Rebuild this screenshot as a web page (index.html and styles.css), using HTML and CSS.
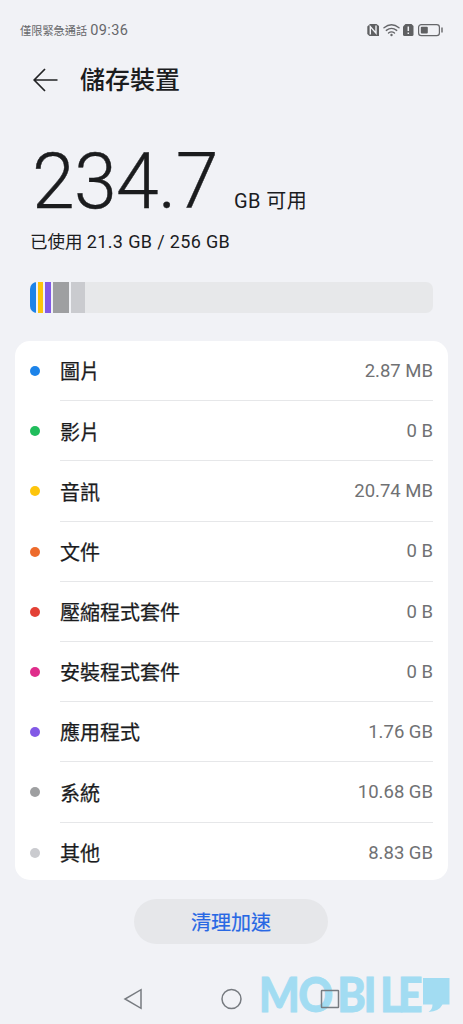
FILE: index.html
```html
<!DOCTYPE html>
<html lang="zh-Hant">
<head>
<meta charset="utf-8">
<title>儲存裝置</title>
<link rel="stylesheet" href="styles.css">
</head>
<body>
<div class="screen">
  <div class="status">
    <span class="carrier">僅限緊急通話</span><span class="clock">09:36</span>
    <svg class="status-icons" width="78" height="16" viewBox="0 0 78 16">
      <path d="M3 2H9.500L12 4V14H2.500L0.300 12V4.500Z" fill="#5f6062"/>
      <path d="M3.300 12.500V4.600L9 11.200V3.500" fill="none" stroke="#f1f2f6" stroke-width="1.400"/>
      <g fill="none" stroke="#66676a" stroke-width="1.400" stroke-linecap="round">
        <path d="M17 5.800Q24.500 -0.200 32 5.800"/><path d="M19.300 8.400Q24.500 4.300 29.700 8.400"/><path d="M21.500 11Q24.500 8.700 27.500 11"/>
      </g>
      <circle cx="24.500" cy="13" r="1.200" fill="#66676a"/>
      <path d="M38.500 2H44.500L46.500 4V12.500Q46.500 14 45 14H37.500Q36 14 36 12.500V4.500Z" fill="#5f6062"/>
      <path d="M41.300 4.600V9M41.300 10.500V12" stroke="#f1f2f6" stroke-width="1.500"/>
      <rect x="51.600" y="2.600" width="20.800" height="11" rx="2.700" fill="none" stroke="#66676a" stroke-width="1.200"/>
      <rect x="53.800" y="4.700" width="7" height="6.800" rx="1" fill="#5f6062"/>
      <path d="M75 5.500V10.500" stroke="#66676a" stroke-width="1.400"/>
    </svg>
  </div>
  <header class="title-bar">
    <svg width="26" height="26" viewBox="0 0 26 26" fill="none" stroke="#222325" stroke-width="1.700"><path d="M25.500 13H2.500M13 2L2.200 13L13 24"/></svg>
    <h1>儲存裝置</h1>
  </header>
  <div class="available"><span class="amount">234.7</span><span class="unit">GB 可用</span></div>
  <p class="used">已使用 <span class="figures">21.3 GB / 256 GB</span></p>
  <div class="bar"><i class="seg blue"></i><i class="seg yellow"></i><i class="seg purple"></i><i class="seg gray"></i><i class="seg silver"></i></div>
  <ul class="card">
    <li><i class="dot blue"></i><div class="row"><span>圖片</span><b>2.87 MB</b></div></li>
    <li><i class="dot green"></i><div class="row"><span>影片</span><b>0 B</b></div></li>
    <li><i class="dot yellow"></i><div class="row"><span>音訊</span><b>20.74 MB</b></div></li>
    <li><i class="dot orange"></i><div class="row"><span>文件</span><b>0 B</b></div></li>
    <li><i class="dot red"></i><div class="row"><span>壓縮程式套件</span><b>0 B</b></div></li>
    <li><i class="dot pink"></i><div class="row"><span>安裝程式套件</span><b>0 B</b></div></li>
    <li><i class="dot purple"></i><div class="row"><span>應用程式</span><b>1.76 GB</b></div></li>
    <li><i class="dot gray"></i><div class="row"><span>系統</span><b>10.68 GB</b></div></li>
    <li><i class="dot silver"></i><div class="row"><span>其他</span><b>8.83 GB</b></div></li>
  </ul>
  <button class="clean">清理加速</button>
  <svg class="watermark" width="195" height="60" viewBox="0 -10 195 60">
    <text class="brand" transform="scale(0.9 1)" y="38" x="4.300 48 91.500 120.500 139 158.500">MOBILE</text>
    <path d="M168 4H194.500V30.500H187.500Q184 37.500 173.500 38Q177.500 35.500 177.500 30.500H168Z" fill="#a2dcf2"/>
  </svg>
  <nav class="nav">
    <svg width="22" height="22" viewBox="0 0 22 22"><path d="M19 1.700V20.300L3 11Z"/></svg>
    <svg width="22" height="22" viewBox="0 0 22 22"><circle cx="10.500" cy="11" r="9.500"/></svg>
    <svg width="22" height="22" viewBox="0 0 22 22"><rect x="2.500" y="2.500" width="17" height="17" rx="0.500"/></svg>
  </nav>
</div>
</body>
</html>
```
FILE: styles.css
```css
* { box-sizing: border-box; }
body { margin: 0; background: #f1f2f6; color: #1b1c1e; font-family: Roboto, "Noto Sans CJK TC", sans-serif; }
.screen { position: relative; width: 463px; height: 1024px; overflow: hidden; display: flex; flex-direction: column; }
.status { display: flex; align-items: center; height: 60px; padding: 0 18px 0 20px; color: #66676a; white-space: nowrap; }
.carrier { font-size: 11.2px; }
.clock { font-size: 14.5px; margin-left: 3px; letter-spacing: 0.4px; }
.status-icons { margin-left: auto; }
.title-bar { display: flex; align-items: center; height: 40px; padding-left: 32px; gap: 22px; }
h1 { margin: 2px 0 0; font-size: 25px; line-height: 40px; font-weight: 500; }
.available { display: flex; align-items: baseline; height: 100px; margin-top: 32px; padding-left: 32px; line-height: 100px; white-space: nowrap; }
.amount { font-size: 77px; font-weight: 300; width: 202px; letter-spacing: -0.7px; -webkit-text-stroke: 0.4px #1b1c1e; }
.unit { font-size: 20px; letter-spacing: 0.4px; }
.used { margin: -4px 0 0 30px; height: 28px; line-height: 28px; font-size: 17.5px; white-space: nowrap; }
.figures { font-size: 18px; letter-spacing: 0.35px; }
.bar { display: flex; gap: 2px; width: 403px; height: 31px; margin: 26px 0 0 30px; border-radius: 7px; overflow: hidden; background: #e7e8ea; }
.seg { width: 5.5px; box-shadow: 2px 0 #f1f2f6; }
.seg.gray { width: 16.5px; }
.seg.silver { width: 13.5px; box-shadow: none; }
.card { list-style: none; width: 433px; height: 539px; margin: 28px 0 0 15px; padding: 0 15px; border-radius: 15px; background: #fff; overflow: hidden; }
.card li { display: flex; align-items: center; gap: 20px; height: 60.2px; }
.dot { width: 10px; height: 10px; border-radius: 50%; flex: none; }
.row { display: flex; flex: 1; height: 100%; padding-top: 0.5px; align-items: center; justify-content: space-between; border-bottom: 1px solid #e6e7e9; font-size: 20px; font-weight: 400; -webkit-text-stroke: 0.25px #1b1c1e; }
.row b { font-size: 18.5px; font-weight: 400; color: #707173; -webkit-text-stroke: 0; }
li:last-child .row { border: 0; }
.blue { background: #1c83e9; }
.green { background: #20bd5c; }
.yellow { background: #fdc50c; }
.orange { background: #ed6b2c; }
.red { background: #e34136; }
.pink { background: #df2d8b; }
.purple { background: #8259e6; }
.gray { background: #9e9fa1; }
.silver { background: #cacbcf; }
.clean { width: 194px; height: 45px; margin: 19px 0 0 134px; padding: 0; border: 0; border-radius: 23px; background: #e6e7ea; color: #2868e4; font: 400 20px "Noto Sans CJK TC", sans-serif; -webkit-text-stroke: 0.2px #2868e4; }
.nav { position: relative; display: flex; gap: 76.5px; margin: 44px 0 0 122px; }
.nav svg { fill: none; stroke: #777b80; stroke-width: 1.5; }
.watermark { position: absolute; left: 255px; top: 964px; }
.brand { font: 900 48px Lato, sans-serif; fill: #a2dcf2; stroke: #a2dcf2; stroke-width: 0.8px; }
```
